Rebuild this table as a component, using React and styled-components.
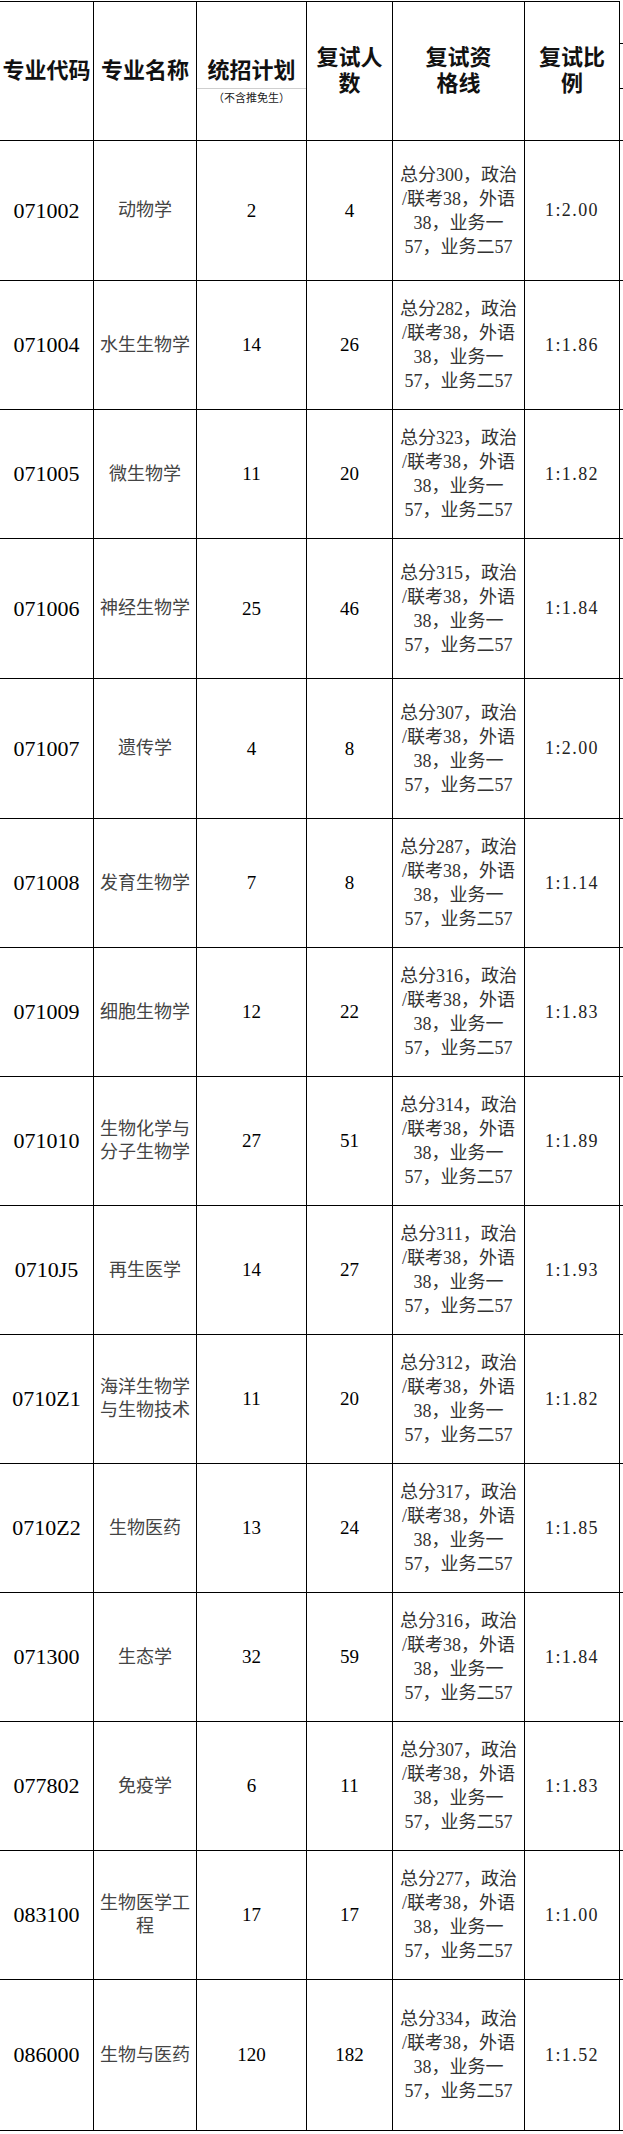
import React from "react";
import styled, { createGlobalStyle } from "styled-components";

const GlobalStyle = createGlobalStyle`
  html, body {
    margin: 0;
    padding: 0;
    background: #fff;
  }
  body {
    font-family: "Liberation Serif", "Noto Sans CJK SC", serif;
    color: #000;
  }
`;

const serif = `"Liberation Serif", "Noto Sans CJK SC", serif`;
const cjk = `"Noto Sans CJK SC", sans-serif`;

const StyledPage = styled.div`
  width: 623px;
  padding-top: 1px;
`;

const StyledRow = styled.div`
  display: grid;
  grid-template-columns: 94px 103px 110px 86px 132px 95px 1fr;
  height: ${(p) => p.$h}px;
  border-bottom: 1px solid #000;
  box-sizing: border-box;
`;

const StyledCell = styled.div`
  box-sizing: border-box;
  border-right: 1px solid #000;
  display: flex;
  flex-direction: column;
  justify-content: center;
  align-items: center;
  text-align: center;
  overflow: hidden;
`;

const StyledHeadCell = styled(StyledCell)`
  border-top: 1px solid #000;
  font-family: ${serif};
  font-weight: 700;
  font-size: 22px;
  line-height: 26px;
  color: #111;
  white-space: nowrap;
`;

const StyledPlanHead = styled(StyledHeadCell)`
  padding-top: 21px;
  align-items: stretch;
`;

const StyledPlanTitle = styled.span`
  display: block;
  padding-bottom: 4px;
  border-bottom: 1px solid #cfcfcf;
`;

const StyledPlanNote = styled.span`
  display: block;
  font-family: ${cjk};
  font-weight: 400;
  font-size: 11px;
  line-height: 17px;
  color: #222;
`;

const StyledStub = styled.div``;

const StyledStubBand = styled.div`
  margin-top: 42px;
  height: 46px;
  box-sizing: border-box;
  border-top: 1px solid #000;
  border-bottom: 1px solid #000;
`;

const StyledCode = styled(StyledCell)`
  font-family: ${serif};
  font-size: 22px;
  color: #000;
`;

const StyledName = styled(StyledCell)`
  font-family: ${serif};
  font-size: 18px;
  line-height: 23px;
  color: #444;
  padding: 0 3px;
`;

const StyledNumber = styled(StyledCell)`
  font-family: ${serif};
  font-size: 19px;
  color: #000;
`;

const StyledQual = styled(StyledCell)`
  font-family: ${serif};
  font-size: 18px;
  line-height: 24px;
  color: #333;
  white-space: nowrap;
`;

const StyledQualLine = styled.span`
  display: block;
`;

const StyledRatio = styled(StyledCell)`
  font-family: ${serif};
  font-size: 18px;
  letter-spacing: 1.4px;
  color: #222;
`;

const majors = [
  { code: "071002", name: "动物学", plan: 2, count: 4, total: 300, ratio: "1:2.00", h: 140 },
  { code: "071004", name: "水生生物学", plan: 14, count: 26, total: 282, ratio: "1:1.86", h: 129 },
  { code: "071005", name: "微生物学", plan: 11, count: 20, total: 323, ratio: "1:1.82", h: 129 },
  { code: "071006", name: "神经生物学", plan: 25, count: 46, total: 315, ratio: "1:1.84", h: 140 },
  { code: "071007", name: "遗传学", plan: 4, count: 8, total: 307, ratio: "1:2.00", h: 140 },
  { code: "071008", name: "发育生物学", plan: 7, count: 8, total: 287, ratio: "1:1.14", h: 129 },
  { code: "071009", name: "细胞生物学", plan: 12, count: 22, total: 316, ratio: "1:1.83", h: 129 },
  { code: "071010", name: "生物化学与分子生物学", plan: 27, count: 51, total: 314, ratio: "1:1.89", h: 129 },
  { code: "0710J5", name: "再生医学", plan: 14, count: 27, total: 311, ratio: "1:1.93", h: 129 },
  { code: "0710Z1", name: "海洋生物学与生物技术", plan: 11, count: 20, total: 312, ratio: "1:1.82", h: 129 },
  { code: "0710Z2", name: "生物医药", plan: 13, count: 24, total: 317, ratio: "1:1.85", h: 129 },
  { code: "071300", name: "生态学", plan: 32, count: 59, total: 316, ratio: "1:1.84", h: 129 },
  { code: "077802", name: "免疫学", plan: 6, count: 11, total: 307, ratio: "1:1.83", h: 129 },
  { code: "083100", name: "生物医学工程", plan: 17, count: 17, total: 277, ratio: "1:1.00", h: 129 },
  { code: "086000", name: "生物与医药", plan: 120, count: 182, total: 334, ratio: "1:1.52", h: 151 },
];

const qualLines = (total) => [
  `总分${total}，政治`,
  "/联考38，外语",
  "38，业务一",
  "57，业务二57",
];

const HeaderRow = () => (
  <StyledRow $h={140}>
    <StyledHeadCell>专业代码</StyledHeadCell>
    <StyledHeadCell>专业名称</StyledHeadCell>
    <StyledPlanHead>
      <StyledPlanTitle>统招计划</StyledPlanTitle>
      <StyledPlanNote>（不含推免生）</StyledPlanNote>
    </StyledPlanHead>
    <StyledHeadCell>
      复试人
      <br />
      数
    </StyledHeadCell>
    <StyledHeadCell>
      复试资
      <br />
      格线
    </StyledHeadCell>
    <StyledHeadCell>
      复试比
      <br />
      例
    </StyledHeadCell>
    <StyledStub>
      <StyledStubBand />
    </StyledStub>
  </StyledRow>
);

const MajorRow = ({ major }) => (
  <StyledRow $h={major.h}>
    <StyledCode>{major.code}</StyledCode>
    <StyledName>{major.name}</StyledName>
    <StyledNumber>{major.plan}</StyledNumber>
    <StyledNumber>{major.count}</StyledNumber>
    <StyledQual>
      {qualLines(major.total).map((line) => (
        <StyledQualLine key={line}>{line}</StyledQualLine>
      ))}
    </StyledQual>
    <StyledRatio>{major.ratio}</StyledRatio>
    <StyledStub />
  </StyledRow>
);

const App = () => {
  return (
    <>
      <GlobalStyle />
      <StyledPage>
        <HeaderRow />
        {majors.map((major) => (
          <MajorRow key={major.code} major={major} />
        ))}
      </StyledPage>
    </>
  );
};

export default App;
